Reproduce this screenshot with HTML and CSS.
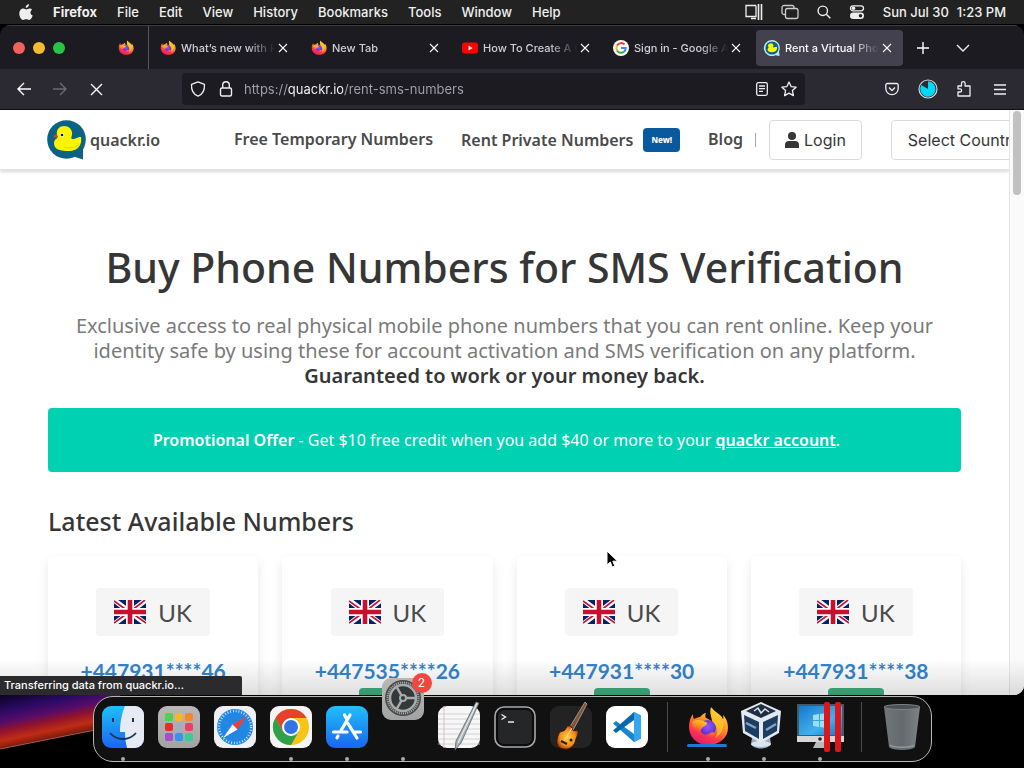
FILE: index.html
```html
<!DOCTYPE html>
<html lang="en">
<head>
<meta charset="utf-8">
<meta name="viewport" content="width=device-width, initial-scale=1">
<title>Rent a Virtual Phone Number</title>
<link rel="stylesheet" href="styles.css">
</head>
<body>
<svg class="defs" aria-hidden="true">
  <defs>
    <linearGradient id="flame" x1="0.8" y1="0" x2="0.3" y2="1">
      <stop offset="0" stop-color="#ffe83a"/><stop offset="0.4" stop-color="#ff9a22"/><stop offset="0.72" stop-color="#ff3c48"/><stop offset="1" stop-color="#e4186f"/>
    </linearGradient>
    <radialGradient id="globe" cx="0.5" cy="0.4" r="0.6">
      <stop offset="0" stop-color="#9059ff"/><stop offset="1" stop-color="#592acb"/>
    </radialGradient>
    <linearGradient id="blue" x1="0" y1="0" x2="0" y2="1"><stop offset="0" stop-color="#1fc0fb"/><stop offset="1" stop-color="#1a66f0"/></linearGradient>
    <linearGradient id="grey" x1="0" y1="0" x2="0" y2="1"><stop offset="0" stop-color="#b9b8b5"/><stop offset="1" stop-color="#a3a3a3"/></linearGradient>
    <linearGradient id="screen" x1="0" y1="0" x2="1" y2="1"><stop offset="0" stop-color="#1976c9"/><stop offset="0.6" stop-color="#3fb1ee"/><stop offset="1" stop-color="#1475c9"/></linearGradient>
    <linearGradient id="bin" x1="0" y1="0" x2="1" y2="0"><stop offset="0" stop-color="#70777a"/><stop offset="0.5" stop-color="#626a6e"/><stop offset="1" stop-color="#7d8285"/></linearGradient>
    <radialGradient id="guitar" cx="0.5" cy="0.5" r="0.6"><stop offset="0" stop-color="#ffd23e"/><stop offset="0.6" stop-color="#ee8e1c"/><stop offset="1" stop-color="#7e2309"/></radialGradient>
    <linearGradient id="dusk" gradientUnits="userSpaceOnUse" x1="0" y1="0" x2="11" y2="52"><stop offset="0" stop-color="#0b0420"/><stop offset="0.3" stop-color="#2a0a63"/><stop offset="0.52" stop-color="#570c6a"/><stop offset="0.66" stop-color="#8c1230"/><stop offset="0.85" stop-color="#c02c14"/><stop offset="1" stop-color="#7c1a0c"/></linearGradient>
    <symbol id="firefox" viewBox="0 0 42 42">
      <path fill="url(#flame)" d="M21 39C9 39 2 30 2 21c0-5 1-9 4-13 0 2 0 4 1 5 2-1 4-2 6-2 2-2 4-4 6-4-1 2-1 4 0 5 2 1 5 2 6 4 0-5-3-8-1-15 3 5 10 7 12 12 1-1 0-3 0-4 4 4 5 9 5 13 0 10-9 17-20 17Z"/>
      <circle cx="21" cy="22" r="8" fill="url(#globe)"/>
      <path fill="url(#flame)" d="M5 16c5-4 10-1 14 0 2 1 1 3-1 4-3 1-3 3-5 5 2 3 6 5 10 2 2-1 4-1 5 1-3 5-10 6-15 3C7 28 5 21 5 16Z"/>
      <path fill="#ffc72c" d="M25 2c3 5 10 7 11 15 1 6-2 12-8 15 5-8 1-12-2-16-2-4-2-8-1-14Z" opacity=".75"/>
    </symbol>
    <symbol id="close" viewBox="0 0 10 10"><path d="M1 1l8 8M9 1L1 9" fill="none" stroke="currentColor" stroke-width="1.1"/></symbol>
    <symbol id="duck" viewBox="0 0 39 40">
      <circle cx="19.500" cy="19.500" r="19.300" fill="#0b6285"/><path d="M36 28v11.500L25 36Z" fill="#0b6285"/>
      <path d="M10 15C9 9 13 6 17 6c6 0 9 5 8 9-1 3-1 4 1 4 3 0 4-2 8-2 1 6-1 14-13 14-9 0-14-2-14-8 0-3 2-4 4-6Z" fill="#fcf500"/>
      <path d="M10 14l-4 2 4 3Z" fill="#e33b1a"/><circle cx="15" cy="15" r="2" fill="#fff"/><circle cx="15" cy="15" r="1.3" fill="#111"/>
      <path d="M17 27c6 2 12 0 15-3" fill="none" stroke="#d8dc06"/>
    </symbol>
    <symbol id="uk" viewBox="0 0 32 24">
      <path fill="#012169" d="M0 0h32v24H0z"/>
      <path d="M0 0l32 24M32 0L0 24" stroke="#fff" stroke-width="5"/>
      <path d="M0 1l14 10M32 23L18 13M31 0L17 11M0 23l15-11" stroke="#c8102e" stroke-width="1.6"/>
      <path d="M16 0v24M0 12h32" stroke="#fff" stroke-width="8"/><path d="M16 0v24M0 12h32" stroke="#c8102e" stroke-width="4.6"/>
    </symbol>
  </defs>
</svg>

<div class="desktop">
  <header class="menubar">
    <nav class="menus" aria-label="Application menu">
      <button class="menu apple" aria-label="Apple"><svg width="14" height="17" viewBox="0 0 14 17"><path fill="#eee" d="M10 0c.2 2-1.400 3.800-3.300 3.900C6.500 2 8.200.3 10 0ZM13 5.700c-2.300 1.500-2 4.700.7 5.900-.6 1.800-2 4.400-3.600 4.400-1.100 0-1.500-.7-2.900-.7s-1.800.7-2.900.7C2.300 16 .3 12.700.3 9.500c0-3.200 2-4.900 4-4.900 1.300 0 2.200.8 3 .8.900 0 2-.9 3.400-.9 1 0 1.800.5 2.300 1.200Z"/></svg></button>
      <button class="menu app">Firefox</button>
      <button class="menu">File</button>
      <button class="menu">Edit</button>
      <button class="menu">View</button>
      <button class="menu">History</button>
      <button class="menu">Bookmarks</button>
      <button class="menu">Tools</button>
      <button class="menu">Window</button>
      <button class="menu">Help</button>
    </nav>
    <div class="status">
      <svg width="18" height="16" viewBox="0 0 18 16" fill="none" stroke="#eee" stroke-width="1.300"><path d="M11 1.500H1v11h2M6 14.500h5M11 1.500v11H3"/><path d="M13.500 0v16M16.500 0v16" stroke-width="1.600"/></svg>
      <svg width="18" height="16" viewBox="0 0 18 16" fill="none" stroke="#ccc" stroke-width="1.300"><path d="M4 10.500H3A2 2 0 0 1 1 8.500v-5a2 2 0 0 1 2-2h8a2 2 0 0 1 2 2V4"/><rect x="4.500" y="4.500" width="12.500" height="10" rx="2"/></svg>
      <svg width="14" height="14" viewBox="0 0 14 14" fill="none" stroke="#eee" stroke-width="1.400"><circle cx="5.800" cy="5.800" r="4.700"/><path d="M9.300 9.300l4 4"/></svg>
      <svg width="16" height="14" viewBox="0 0 16 14"><rect x="1.500" y=".8" width="13" height="5" rx="2.500" fill="none" stroke="#eee" stroke-width="1.300"/><circle cx="4.500" cy="3.300" r="1.800" fill="#eee"/><rect x="1" y="7.500" width="14" height="6.500" rx="3.200" fill="#eee"/><circle cx="11.500" cy="10.800" r="1.800" fill="#222"/></svg>
      <span class="clock"><span>Sun Jul 30</span><span>1:23 PM</span></span>
    </div>
  </header>

  <section class="window">
    <div class="tabbar">
      <div class="lights">
        <button class="light red" aria-label="Close window"></button>
        <button class="light yellow" aria-label="Minimize"></button>
        <button class="light green" aria-label="Zoom"></button>
      </div>
      <button class="pinned" aria-label="Pinned tab"><svg width="16" height="16"><use href="#firefox"/></svg></button>
      <div class="tabs">
        <div class="tab"><svg width="16" height="16"><use href="#firefox"/></svg><button class="title">What’s new with Firefox</button><button class="x" aria-label="Close tab"><svg width="10" height="10"><use href="#close"/></svg></button></div>
        <div class="tab"><svg width="16" height="16"><use href="#firefox"/></svg><button class="title">New Tab</button><button class="x" aria-label="Close tab"><svg width="10" height="10"><use href="#close"/></svg></button></div>
        <div class="tab"><svg width="16" height="16" viewBox="0 0 16 16"><rect y="2.500" width="16" height="11" rx="2.500" fill="#f00"/><path d="M6.500 5.500v5l4-2.500Z" fill="#fff"/></svg><button class="title">How To Create A Google</button><button class="x" aria-label="Close tab"><svg width="10" height="10"><use href="#close"/></svg></button></div>
        <div class="tab"><svg width="16" height="16" viewBox="0 0 16 16"><circle cx="8" cy="8" r="8" fill="#fff"/><g fill="none" stroke-width="2"><path d="M11.500 4.500A4.800 4.800 0 0 0 4 5.500" stroke="#ea4335"/><path d="M4 5.500a5 5 0 0 0 0 5" stroke="#fbbc05"/><path d="M4 10.500a4.800 4.800 0 0 0 7 1.200" stroke="#34a853"/><path d="M11 11.700A4.500 4.500 0 0 0 12.700 8H8" stroke="#4285f4"/></g></svg><button class="title">Sign in - Google Accounts</button><button class="x" aria-label="Close tab"><svg width="10" height="10"><use href="#close"/></svg></button></div>
        <div class="tab active"><svg width="16" height="16" viewBox="0 0 16 16"><path d="M8 0a8 8 0 0 1 7 11.500l.6 4.500-4.300-.8A8 8 0 1 1 8 0Z" fill="#b9ecec"/><circle cx="8" cy="8" r="6.600" fill="#0b6285"/><path d="M4 6c0-3 5-4 5.500-.5L9 7.500l4-.7c.5 3-1 5.400-5 5.400-4.500 0-5.500-3-3.300-4.700Z" fill="#fcf500"/></svg><button class="title">Rent a Virtual Phone Number</button><button class="x" aria-label="Close tab"><svg width="10" height="10"><use href="#close"/></svg></button></div>
      </div>
      <button class="tool new" aria-label="New tab"><svg width="12" height="12" viewBox="0 0 12 12"><path d="M6 0v12M0 6h12" stroke="#fff" stroke-width="1.400"/></svg></button>
      <button class="tool" aria-label="List all tabs"><svg width="14" height="8" viewBox="0 0 14 8"><path d="M1 1l6 6 6-6" fill="none" stroke="#eee" stroke-width="1.400"/></svg></button>
    </div>

    <div class="toolbar">
      <div class="history">
        <button class="tool" aria-label="Back"><svg width="14" height="14" viewBox="0 0 14 14"><path d="M14 7H1M7 1L1 7l6 6" fill="none" stroke="#fff" stroke-width="1.400"/></svg></button>
        <button class="tool" aria-label="Forward" disabled><svg width="14" height="14" viewBox="0 0 14 14"><path d="M0 7h13M7 1l6 6-6 6" fill="none" stroke="#6c6b74" stroke-width="1.400"/></svg></button>
        <button class="tool" aria-label="Stop"><svg width="13" height="13" viewBox="0 0 13 13"><path d="M1 1l11 11M12 1L1 12" fill="none" stroke="#fff" stroke-width="1.400"/></svg></button>
      </div>
      <div class="urlbar">
        <svg width="16" height="16" viewBox="0 0 16 16" fill="none" stroke="#eee" stroke-width="1.300"><path d="M8 .8l6.500 2.500C14.800 9 12.500 13.500 8 15.200 3.500 13.500 1.200 9 1.500 3.300Z" stroke-linejoin="round"/></svg>
        <svg width="14" height="16" viewBox="0 0 14 16" fill="none" stroke="#eee" stroke-width="1.400"><rect x="1.500" y="7" width="11" height="8" rx="1.500"/><path d="M3.700 7V4a3.300 3.300 0 0 1 6.600 0v3"/></svg>
        <input class="url" type="text" aria-label="Address" value="https://quackr.io/rent-sms-numbers">
        <svg width="12" height="14" viewBox="0 0 12 14" fill="none" stroke="#eee" stroke-width="1.300"><rect x=".7" y=".7" width="10.600" height="12.600" rx="1.500"/><path d="M3 4h6M3 6.700h6M3 9.400h4"/></svg>
        <svg width="16" height="16" viewBox="0 0 16 16" fill="none" stroke="#eee" stroke-width="1.300" stroke-linejoin="round"><path d="M8 1l2.100 4.600 5 .6-3.700 3.400 1 5L8 12.100l-4.400 2.500 1-5L.9 6.200l5-.6Z"/></svg>
      </div>
      <div class="extras">
        <button class="tool" aria-label="Save to Pocket"><svg width="14" height="14" viewBox="0 0 14 14" fill="none" stroke="#eee" stroke-width="1.300"><path d="M.8 3A1.500 1.500 0 0 1 2.300 1.500h9.400A1.500 1.500 0 0 1 13.200 3v3.500a6.200 6.200 0 0 1-12.400 0Z"/><path d="M4 5.500l3 3 3-3"/></svg></button>
        <button class="tool" aria-label="Session timer"><svg width="20" height="20" viewBox="0 0 20 20"><circle cx="10" cy="10" r="9" fill="#2b2a33" stroke="#d5d5dc" stroke-width="1.200"/><path d="M10 10V2.300A7.700 7.700 0 1 1 3.300 6Z" fill="#00d9f7"/></svg></button>
        <button class="tool" aria-label="Extensions"><svg width="14" height="16" viewBox="0 0 14 16" fill="none" stroke="#eee" stroke-width="1.300"><path d="M1 5h3.500V2.500a1.800 1.800 0 0 1 3.600 0V5H13v10H1v-4h2a1.600 1.600 0 0 0 0-3.200H1Z" stroke-linejoin="round"/></svg></button>
        <button class="tool" aria-label="Menu"><svg width="12" height="11" viewBox="0 0 12 11"><path d="M0 1h12M0 5.500h12M0 10h12" stroke="#eee" stroke-width="1.400"/></svg></button>
      </div>
    </div>

    <div class="viewport">
      <div class="page">
        <header class="site">
          <a class="brand" href="#"><svg width="39" height="40"><use href="#duck"/></svg><span>quackr.io</span></a>
          <nav class="links">
            <a href="#">Free Temporary Numbers</a>
            <a href="#" class="rent">Rent Private Numbers <span class="badge">New!</span></a>
            <a href="#">Blog</a>
          </nav>
          <span class="rule"></span>
          <a class="login" href="#"><svg width="14" height="16" viewBox="0 0 14 16" fill="#363636"><circle cx="7" cy="4" r="4"/><path d="M0 16v-3a4 4 0 0 1 4-4h6a4 4 0 0 1 4 4v3Z"/></svg>Login</a>
          <select class="country" aria-label="Country"><option>Select Country</option></select>
        </header>
        <main class="content">
          <h1>Buy Phone Numbers for SMS Verification</h1>
          <p class="lead">Exclusive access to real physical mobile phone numbers that you can rent online. Keep your identity safe by using these for account activation and SMS verification on any platform. <strong>Guaranteed to work or your money back.</strong></p>
          <div class="promo"><b>Promotional Offer</b> - Get $10 free credit when you add $40 or more to your <a href="#">quackr account</a>.</div>
          <h2>Latest Available Numbers</h2>
          <div class="cards">
            <article class="card"><div class="tag"><svg width="32" height="24"><use href="#uk"/></svg>UK</div><a class="number" href="#">+447931****46</a><button class="open" aria-label="Open"></button></article>
            <article class="card"><div class="tag"><svg width="32" height="24"><use href="#uk"/></svg>UK</div><a class="number" href="#">+447535****26</a><button class="open" aria-label="Open"></button></article>
            <article class="card"><div class="tag"><svg width="32" height="24"><use href="#uk"/></svg>UK</div><a class="number" href="#">+447931****30</a><button class="open" aria-label="Open"></button></article>
            <article class="card"><div class="tag"><svg width="32" height="24"><use href="#uk"/></svg>UK</div><a class="number" href="#">+447931****38</a><button class="open" aria-label="Open"></button></article>
          </div>
        </main>
      </div>
      <div class="scroll"><div class="thumb"></div></div>
      <div class="shade"></div>
      <div class="loading">Transferring data from quackr.io…</div>
    </div>
  </section>

  <footer class="dockbar">
    <svg class="wall" width="120" height="73" viewBox="0 0 120 73"><path d="M0 0h120v30L0 54Z" fill="url(#dusk)"/><path d="M0 54l120-24" stroke="#a35a4c"/></svg>
    <div class="dock">
      <button class="item on" aria-label="Finder"><svg viewBox="0 0 42 42"><rect width="42" height="42" rx="9" fill="url(#blue)"/><path d="M23 0h10a9 9 0 0 1 9 9v24a9 9 0 0 1-9 9h-8c-1-4-2-9-2-16h-5C18 16 20 7 23 0Z" fill="#e6eaf3"/><path d="M11 12v4M31 12v4" stroke="#17334f" stroke-width="2"/><path d="M8 27c7 8 19 8 26 0" fill="none" stroke="#17334f" stroke-width="1.800"/></svg></button>
      <button class="item" aria-label="Launchpad"><svg viewBox="0 0 42 42"><rect width="42" height="42" rx="9" fill="url(#grey)"/><g><rect x="7" y="7" width="8" height="8" rx="2" fill="#50d14c"/><rect x="17" y="7" width="8" height="8" rx="2" fill="#f7b52b"/><rect x="27" y="7" width="8" height="8" rx="2" fill="#f58730"/><rect x="7" y="17" width="8" height="8" rx="2" fill="#e32d2d"/><rect x="17" y="17" width="8" height="8" rx="2" fill="#9eb0bf"/><rect x="27" y="17" width="8" height="8" rx="2" fill="#f23d60"/><rect x="7" y="27" width="8" height="8" rx="2" fill="#a74ccc"/><rect x="17" y="27" width="8" height="8" rx="2" fill="#3793ef"/><rect x="27" y="27" width="8" height="8" rx="2" fill="#3bcb96"/></g></svg></button>
      <button class="item" aria-label="Safari"><svg viewBox="0 0 42 42"><rect width="42" height="42" rx="9" fill="#eef0f3"/><circle cx="21" cy="21" r="18" fill="#2287e2"/><circle cx="21" cy="21" r="16" fill="none" stroke="#cfe8fb" stroke-width="2.500" stroke-dasharray=".9 1.900"/><path d="M33 10L23.500 23.500l-5-5Z" fill="#ec4036"/><path d="M9 32l9.500-13.500 5 5Z" fill="#fff"/></svg></button>
      <button class="item on" aria-label="Chrome"><svg viewBox="0 0 42 42"><rect width="42" height="42" rx="9" fill="#f4f4f4"/><circle cx="21" cy="21" r="18" fill="#f9c413"/><path d="M5.400 12A18 18 0 0 1 36.600 12H21l-7.800 13.500Z" fill="#e7402f"/><path d="M5.400 12a18 18 0 0 0 15.600 27l7.800-13.500H13.200Z" fill="#2fa04c"/><circle cx="21" cy="21" r="9" fill="#fff"/><circle cx="21" cy="21" r="7" fill="#2f75e8"/></svg></button>
      <button class="item on" aria-label="App Store"><svg viewBox="0 0 42 42"><rect width="42" height="42" rx="9" fill="url(#blue)"/><g stroke="#fff" stroke-width="3.200" stroke-linecap="round" fill="none"><path d="M18.500 9l2.700 4.700M24 9L14.500 25.500M12 30l-1 1.800M22 17.500L31 32M7.500 26H21M28.500 26h6"/></g></svg></button>
      <button class="item on bounce" aria-label="System Settings, 2 alerts"><svg viewBox="0 0 42 42"><rect width="42" height="42" rx="9" fill="url(#grey)"/><circle cx="21" cy="20" r="18" fill="#484a4a"/><circle cx="21" cy="20" r="15.500" fill="none" stroke="#a0a4a4" stroke-width="2" stroke-dasharray="1.200 .9"/><circle cx="21" cy="20" r="13" fill="#353838" stroke="#a8abab" stroke-width="2.500"/><circle cx="21" cy="20" r="3" fill="#353838" stroke="#a8abab" stroke-width="2"/><path d="M24 20h10M19.500 22.500l-5 8.800M19.500 17.500l-5-8.800" stroke="#a8abab" stroke-width="2.500"/></svg><span class="alert">2</span></button>
      <button class="item" aria-label="TextEdit"><svg viewBox="0 0 42 42"><rect width="42" height="42" rx="9" fill="#f7f7f7"/><path d="M0 8h42M0 13h42M0 18h42M0 23h42M0 28h42M0 33h42M0 38h42" stroke="#c9c9cb" stroke-width=".8"/><path d="M6 0v42" stroke="#e0bcbc"/><path d="M38-4l3 1L23 37l-6 7 1-9Z" fill="#aab1b7" stroke="#58646c" stroke-width=".8"/><path d="M39-3L20 37" stroke="#e7edf0" stroke-width="1.200"/></svg></button>
      <button class="item" aria-label="Terminal"><svg viewBox="0 0 42 42"><rect x="1" y="1" width="40" height="40" rx="9" fill="#0c0c0c" stroke="#a9a9ab" stroke-width="1.600"/><rect x="4" y="4" width="34" height="34" rx="6" fill="#252627"/><path d="M7.500 8.500l4 2.500-4 2.500M14 16h6" fill="none" stroke="#eee" stroke-width="1.400"/></svg></button>
      <button class="item" aria-label="GarageBand"><svg viewBox="0 0 42 42"><rect width="42" height="42" rx="9" fill="#232323"/><path d="M35-4l2 2L22 26l-4-2Z" fill="#7d553d" stroke="#b4a79b" stroke-width=".8"/><path d="M9 27c3-3 6-1 7-5 1-3 5-3 6 0s1 3 5 2c3 1 0 6-1 9-1 6-5 11-12 10-6 0-10-5-5-16Z" fill="url(#guitar)" stroke="#421508"/><path d="M22 22L13 37" stroke="#eedab0"/><path d="M11 35l6 3" stroke="#391a0d" stroke-width="2"/><circle cx="21" cy="34" r="1.500" fill="#2d1209"/></svg></button>
      <button class="item" aria-label="Visual Studio Code"><svg viewBox="0 0 42 42"><rect width="42" height="42" rx="9" fill="#fff"/><path d="M28 6l7 3.500v23L28 36 7 17.500l3-2.500 18 13Z" fill="#1686cf"/><path d="M28 6L7 24.500l3 2.500 18-13Z" fill="#0b67ad"/><path d="M28 6l7 3.500v23L28 36Z" fill="#35a7ef"/></svg></button>
      <span class="split"></span>
      <button class="item on" aria-label="Firefox"><svg viewBox="0 0 42 42"><use href="#firefox"/></svg><span class="progress"></span></button>
      <button class="item on" aria-label="VirtualBox"><svg viewBox="0 0 42 42"><g transform="translate(-3 0)"><path d="M12 32c0-4 18-4 18 0l1 6c-3 6-17 6-20 0Z" fill="#9caec5"/><ellipse cx="21" cy="38" rx="10" ry="3" fill="#dbe3ed"/><path d="M21-4l20 9-2 22-18 10L3 27 1 5Z" fill="#e3e9ef"/><path d="M21-2l15 7-15 7-15-7Z" fill="#1f2e43"/><path d="M14 5l4-3 3 5 4-4 4 3" fill="none" stroke="#dae3ef" stroke-width="1.500"/><path d="M4 9l15 7v17L5 25ZM38 9l-15 7v17l14-8Z" fill="#1d3c61"/><path d="M6 17l10 5M26 24l10-6" stroke="#86a3bd" stroke-width="2.500"/></g></svg></button>
      <button class="item on" aria-label="Parallels Desktop"><svg viewBox="0 0 42 42"><path d="M-2-2h47v33H-2Z" fill="#445964"/><path d="M0 0h43v29H0Z" fill="url(#screen)"/><path d="M14 9l6-1v6h-6ZM21 8l7-1v7h-7ZM14 15h6v6l-6-1ZM21 15h7v7l-7-1Z" fill="#9ee0fc"/><path d="M-2 30h47v6H-2Z" fill="#d7d7d7"/><path d="M17 36h9l2 6H14Z" fill="#bababa"/><circle cx="21" cy="33" r="1.800" fill="#222"/><rect x="25" y="-4" width="6" height="50" rx="2" fill="#df151c"/><rect x="36" y="-4" width="6" height="50" rx="2" fill="#df151c"/></svg></button>
      <span class="split wide"></span>
      <button class="item" aria-label="Trash"><svg viewBox="0 0 42 42"><path d="M3 1h36l-5 40c-3 4-23 4-26 0Z" fill="url(#bin)"/><ellipse cx="21" cy="1" rx="18" ry="2.500" fill="#4a5053" stroke="#7d8385"/><path d="M9 39c3 3 21 3 24 0" fill="none" stroke="#969b9d" stroke-width="1.500"/></svg></button>
    </div>
  </footer>
  <svg class="pointer" width="13" height="19" viewBox="0 0 13 19"><path d="M1 1v14l3.300-3 2 5 2.500-1-2-4.800H11.500Z" fill="#000" stroke="#fff" stroke-width="1"/></svg>
</div>
</body>
</html>
```
FILE: styles.css
```css
* { box-sizing: border-box; }
body { margin: 0; background: #000; font-family: Inter, "Liberation Sans", sans-serif; }
button { border: 0; padding: 0; background: none; color: inherit; font: inherit; }
a { color: inherit; text-decoration: none; }
svg { display: block; flex: none; overflow: visible; }
.defs { position: absolute; width: 0; height: 0; }
.desktop { position: relative; display: flex; flex-direction: column; height: 100vh; overflow: hidden; }

/* Menu bar */
.menubar { display: flex; justify-content: space-between; align-items: center; height: 24px; flex: none; padding: 0 18px 0 19px; background: #222223; color: #f0f0f0; font-size: 13px; font-weight: 500; white-space: nowrap; }
.menus { display: flex; align-items: center; gap: 20px; }
.app { font-weight: 700; }
.status { display: flex; align-items: center; gap: 18px; }
.clock { display: flex; gap: 8px; }

/* Browser chrome */
.window { display: flex; flex-direction: column; flex: 1; min-height: 0; margin-top: 1px; border-radius: 10px 10px 10px 0; overflow: hidden; }
.tabbar { display: flex; align-items: center; height: 44px; flex: none; background: #1c1b22; border-top: 1px solid #3d3c42; color: #fbfbfe; }
.lights { display: flex; gap: 8px; padding-left: 13px; }
.light { width: 12px; height: 12px; border-radius: 50%; }
.red { background: #f0625a; }
.yellow { background: #f5bc2f; }
.green { background: #2bc545; }
.pinned { display: flex; align-items: center; align-self: stretch; margin-left: 53px; padding-right: 14px; border-right: 1px solid #55545c; }
.tabs { display: flex; gap: 4px; margin-left: 3px; }
.tab { display: flex; align-items: center; width: 147px; height: 36px; padding: 0 11px 0 8px; border-radius: 4px; color: #cfcfd6; font-size: 11px; font-weight: 500; }
.active { background: #42414d; color: #fbfbfe; }
.title { flex: 1; min-width: 0; margin: 0 3px 0 5px; overflow: hidden; text-align: left; white-space: nowrap; mask-image: linear-gradient(to right, #000 70%, transparent); }
.x { color: #fff; }
.tool { display: flex; align-items: center; justify-content: center; width: 36px; height: 36px; flex: none; }
.tabbar .tool { width: 40px; }
.toolbar { display: flex; align-items: center; height: 41px; flex: none; background: #2b2a33; border-bottom: 1px solid #111; padding: 0 6px; }
.history, .extras { display: flex; }
.urlbar { display: flex; align-items: center; gap: 13px; flex: 1; height: 32px; margin: 0 69px 0 68px; padding: 0 8px; border-radius: 4px; background: #1c1b22; }
.url { flex: 1; min-width: 0; border: 0; outline: 0; padding: 0; margin-left: -2px; font: 13px Inter, sans-serif; color: transparent; background: linear-gradient(to right, #a3a2aa 44px, #fff 44px, #fff 99px, #a3a2aa 99px); background-clip: text; -webkit-background-clip: text; }

/* Web page */
.viewport { position: relative; display: flex; flex: 1; min-height: 0; background: #fff; overflow: hidden; }
.page { flex: 1; min-width: 0; overflow: hidden; color: #363636; font-family: "Noto Sans", sans-serif; }
.site { position: relative; display: flex; align-items: center; height: 60px; padding-left: 47px; border-bottom: 1px solid #e2e4e6; box-shadow: 0 2px 3px #d9dbdd; white-space: nowrap; }
.brand { display: flex; align-items: center; gap: 4px; flex: none; width: 187px; color: #4a4a4a; font-size: 16px; font-weight: 600; }
.links { display: flex; gap: 28px; flex: none; color: #4a4a4a; font-size: 16px; font-weight: 600; }
.rent { display: flex; align-items: center; gap: 10px; }
.badge { padding: 0 8px; border-radius: 4px; background: #08599e; color: #fff; font-size: 8px; font-weight: 800; line-height: 24px; }
.rule { width: 1px; height: 14px; margin: 0 13px 0 12px; background: #aaa; flex: none; }
.login { display: flex; align-items: center; gap: 5px; height: 40px; padding: 0 15px; border: 1px solid #dbdbdb; border-radius: 4px; font: 16px Inter, sans-serif; flex: none; }
.country { appearance: none; flex: none; width: 164px; height: 40px; margin-left: 29px; padding: 0 16px; border: 1px solid #dbdbdb; border-radius: 4px; background: #fff; color: #363636; font: 16px Inter, sans-serif; }
.content { padding: 72px 48px 0; }
h1 { margin: 0; text-align: center; font-size: 41px; font-weight: 500; line-height: 50px; }
.lead { margin: 21px 12px 20px; text-align: center; color: #7a7a7a; font-size: 20px; line-height: 25px; }
.lead strong { display: block; color: #363636; font-weight: 600; }
.promo { padding: 20px 40px 20px 24px; border-radius: 4px; background: #00d1b2; color: #fff; text-align: center; font-size: 16px; line-height: 24px; }
.promo b { font-weight: 600; }
.promo a { font-weight: 600; text-decoration: underline; }
h2 { margin: 34px 0 20px; font-size: 25px; font-weight: 500; line-height: 30px; }
.cards { display: grid; grid-template-columns: repeat(4, 1fr); gap: 24px; }
.card { display: flex; flex-direction: column; align-items: center; padding: 32px 12px; border-radius: 4px; box-shadow: 0 6px 12px rgba(10, 10, 10, 0.09), 0 0 1px rgba(10, 10, 10, 0.06); }
.tag { display: flex; align-items: center; gap: 12px; height: 48px; padding: 0 18px; border-radius: 4px; background: #f5f5f5; color: #4a4a4a; font-family: Lato, sans-serif; font-size: 24px; }
.number { margin-top: 20px; color: #3285d0; font-family: Lato, sans-serif; font-size: 21px; font-weight: 700; line-height: 30px; }
.open { width: 56px; height: 32px; margin-top: 2px; border-radius: 4px; background: #3eb081; }
.scroll { width: 15px; flex: none; padding: 1px 3px; background: #fafafa; border-left: 1px solid #e5e5e5; }
.thumb { width: 8px; height: 84px; border-radius: 4px; background: #c1c1c1; }
.shade { position: absolute; inset: auto 0 0 0; height: 36px; background: linear-gradient(transparent, rgba(0, 0, 0, 0.13)); }
.loading { position: absolute; left: 0; bottom: 0; min-width: 242px; padding: 0 4px; border-radius: 0 2px 0 0; background: #2b2b2d; color: #fff; font-size: 11px; font-weight: 500; line-height: 19px; }

/* Dock */
.dockbar { position: relative; display: flex; justify-content: center; align-items: flex-start; height: 73px; flex: none; padding-top: 1px; background: #000; }
.wall { position: absolute; left: 0; top: 0; }
.dock { position: relative; display: flex; gap: 14px; padding: 9px 8px 13px; border: 1px solid #b9b8b0; border-radius: 20px; background: #111; }
.item { position: relative; width: 42px; height: 42px; }
.item svg { width: 42px; height: 42px; }
.on::after { content: ""; position: absolute; left: 19px; top: 51px; width: 4px; height: 4px; border-radius: 50%; background: #aaa; }
.bounce svg { position: relative; top: -28px; }
.alert { position: absolute; right: -8px; top: -33px; width: 20px; border-radius: 50%; background: #f5453f; color: #fff; font-size: 12px; line-height: 20px; text-align: center; }
.progress { position: absolute; left: 0; bottom: 1px; width: 40px; height: 3px; border-radius: 2px; background: #1d78d8; }
.split { width: 1px; height: 50px; margin: -4px 5px; background: #4b4b4b; }
.wide { margin: -4px 5px -4px 6px; }
.pointer { position: absolute; left: 606px; top: 550px; }
```
